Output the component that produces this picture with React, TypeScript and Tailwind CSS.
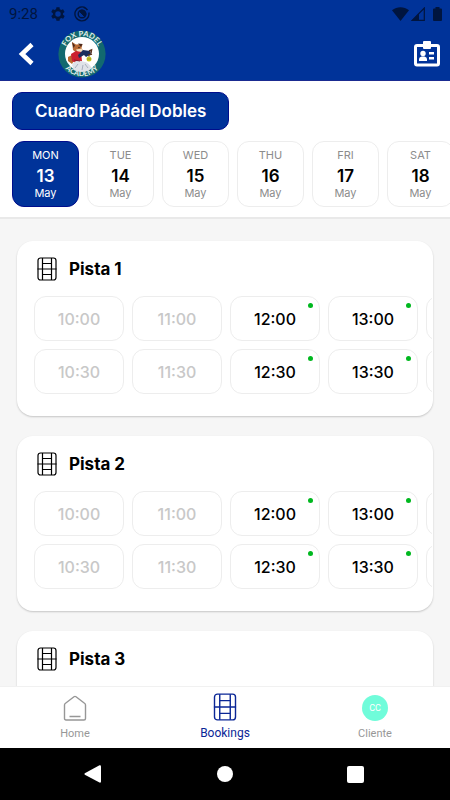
import React from "react";

const days = [
  { name: "MON", day: 13 },
  { name: "TUE", day: 14 },
  { name: "WED", day: 15 },
  { name: "THU", day: 16 },
  { name: "FRI", day: 17 },
  { name: "SAT", day: 18 },
];

const columns = [
  { times: ["10:00", "10:30"], free: false },
  { times: ["11:00", "11:30"], free: false },
  { times: ["12:00", "12:30"], free: true },
  { times: ["13:00", "13:30"], free: true },
  { times: ["14:00", "14:30"], free: true },
];

function CourtIcon({ className }: { className: string }) {
  return (
    <svg viewBox="0 0 20 24" className={className} fill="none" stroke="currentColor" aria-hidden="true">
      <rect x="1" y="1" width="18" height="22" rx="2.500" strokeWidth="1.200" />
      <path d="M5.500 1v22M14.500 1v22" strokeWidth="1.200" />
      <path d="M.5 12h19M5.500 6.500h9M5.500 17.500h9" strokeWidth="1.200" />
    </svg>
  );
}

function ClubLogo() {
  return (
    <svg viewBox="0 0 48 48" className="size-12" role="img" aria-label="Fox Padel Academy">
      <defs>
        <path id="arc-top" d="M6.200 24a17.800 17.800 0 0 1 35.600 0" />
        <path id="arc-bottom" d="M1.800 24a22.200 22.200 0 0 0 44.400 0" />
      </defs>
      <circle cx="24" cy="24" r="23.600" fill="#12696f" />
      <circle cx="24" cy="24" r="17" fill="#fff" />
      <g fill="#e3efec" fontFamily="Lato, sans-serif" fontWeight="700" fontSize="7.500">
        <text textAnchor="middle">
          <textPath href="#arc-top" startOffset="50%">FOX PADEL</textPath>
        </text>
        <text textAnchor="middle">
          <textPath href="#arc-bottom" startOffset="50%">ACADEMY</textPath>
        </text>
      </g>
      <path d="M14 12l4 2.500 6.500-.5-1 4 1.500 2.500-6 2.500-4-3z" fill="#b96b35" />
      <path d="M14 12l3 3.500-1.500 2.500zM20 13.500l4.500.5-1.500 3z" fill="#49291d" />
      <path d="M18 19.500l6-1 1 2.500-5 1.500z" fill="#f6dfbe" />
      <circle cx="21" cy="17.500" r=".7" fill="#211a1a" />
      <path d="M10 27l4-2 3 4-3 5-4-3z" fill="#b9692d" />
      <path d="M13 24l5-3 5 1 1 9-5 3-5-3z" fill="#cb1f2e" />
      <path d="M14 35c2-4 5-5 9-4l4 1c4 1 7 5 6 7-4 3-12 4-17 1z" fill="#dfe2e8" />
      <path d="M17 38l3-4M24 40l1-5M30 38l-3-4" stroke="#9ba2b1" strokeWidth=".8" />
      <path d="M20 25l5-5 7 1 1 3-5 3-2-2-5 3z" fill="#1b2e5d" />
      <path d="M31 21l2.500-1-.5 3M30 25l4-1" stroke="#57311f" strokeWidth="1.500" fill="none" />
      <path d="M31 25v3" stroke="#333" strokeWidth=".8" />
      <circle cx="31" cy="29" r="2.500" fill="#c9c927" />
      <path d="M29 29h4" stroke="#817c26" strokeWidth=".7" />
      <path d="M16 30l6 1" stroke="#861c2b" strokeWidth="1" />
    </svg>
  );
}

function StatusBar() {
  return (
    <div className="flex h-7 items-center pr-2 pl-[9px] font-['Roboto',sans-serif] text-[15px] text-[#00153f]">
      <span>9:28</span>
      <svg viewBox="4 3 18 18" className="ml-[13px] size-[14px]" fill="currentColor" aria-hidden="true">
        <path d="M19.400 13c.1-.6.1-1.400 0-2l2.100-1.600-2-3.500-2.500 1a8 8 0 0 0-1.700-1L15 3.200h-4l-.5 2.700a8 8 0 0 0-1.700 1l-2.500-1-2 3.500L6.500 11a7 7 0 0 0 0 2l-2.200 1.600 2 3.500 2.500-1a8 8 0 0 0 1.700 1l.5 2.700h4l.4-2.700a8 8 0 0 0 1.700-1l2.500 1 2-3.500zM13 15.500a3.500 3.500 0 1 1 0-7 3.500 3.500 0 0 1 0 7z" />
      </svg>
      <svg viewBox="0 0 16 16" className="ml-[9px] size-4" fill="none" stroke="currentColor" aria-hidden="true">
        <path d="M12 2.200A7 7 0 1 0 14.800 6.500M9.500 1.200A7 7 0 0 1 13.500 4" strokeWidth="1.400" />
        <circle cx="8" cy="8" r="3.800" strokeWidth="1.400" />
        <path d="M5.300 5.300l5.400 5.400A3.800 3.800 0 0 0 5.300 5.300z" fill="currentColor" strokeWidth="1" />
      </svg>
      <div className="ml-auto flex items-center gap-[2px]">
        <svg viewBox="0 0 17 14" className="h-[14px] w-[17px]" fill="currentColor" aria-hidden="true">
          <path d="M0 3.300C5-.8 12-.8 17 3.300L8.500 14z" />
        </svg>
        <svg viewBox="0 0 14 14" className="size-[14px]" aria-hidden="true">
          <path d="M13.300 1v12.300H1.200z" fill="none" stroke="currentColor" strokeWidth="1.200" />
          <path d="M8 6.500V14H.5z" fill="currentColor" />
        </svg>
        <svg viewBox="0 0 9 14" className="ml-[6px] h-[14px] w-[9px]" fill="currentColor" aria-hidden="true">
          <path d="M2.500 1.500V0h4v1.500H8q1 0 1 1V13q0 1-1 1H1q-1 0-1-1V2.500q0-1 1-1z" />
        </svg>
      </div>
    </div>
  );
}

function Header() {
  return (
    <header className="bg-[#003399]">
      <StatusBar />
      <div className="flex h-[53px] items-center border-b border-[#1a2b91] pr-[9px] pb-px pl-[18px]">
        <button type="button" aria-label="Back" className="flex h-8 w-4 items-center">
          <svg viewBox="0 0 16 24" className="h-6 w-4" fill="none" stroke="#fff" strokeWidth="4.500" aria-hidden="true">
            <path d="M14 2.500L4 12l10 9.500" />
          </svg>
        </button>
        <div className="ml-6">
          <ClubLogo />
        </div>
        <button type="button" aria-label="Membership card" className="ml-auto">
          <svg viewBox="0 0 28 26" className="h-[26px] w-7" aria-hidden="true">
            <rect x="2.500" y="4.500" width="23" height="19.500" rx="1.500" fill="none" stroke="#fff" strokeWidth="3" />
            <rect x="10" y="0" width="8" height="8" rx="1" fill="#fff" />
            <circle cx="10" cy="12.500" r="2.700" fill="#fff" />
            <path d="M6 20v-2q0-2 2.500-2.500h3q2.500.5 2.500 2.500v2zM16 11h5v2.500h-5zM16 16h5v2.500h-5z" fill="#fff" />
          </svg>
        </button>
      </div>
    </header>
  );
}

function DayButton({ name, day, selected }: { name: string; day: number; selected: boolean }) {
  const box = selected ? "border-[#000d8c] bg-[#003399] text-white" : "border-[#ededed] bg-white text-[#8c8c8c]";
  return (
    <button
      type="button"
      aria-pressed={selected}
      className={`flex h-[66px] w-[67px] shrink-0 flex-col items-center rounded-[12px] border pt-[5px] ${box}`}
    >
      <span className="text-[11px] leading-4">{name}</span>
      <span className={`text-[17px] leading-[26px] font-semibold ${selected ? "text-white" : "text-black"}`}>{day}</span>
      <span className="text-[11px] leading-2">May</span>
    </button>
  );
}

function Slot({ time, free }: { time: string; free: boolean }) {
  return (
    <button
      type="button"
      disabled={!free}
      className={`relative h-[45px] w-[90px] rounded-[12px] border border-[#ededed] text-base font-medium ${
        free ? "text-black" : "text-[#c8c8c8]"
      }`}
    >
      {time}
      {free && <span className="absolute top-[6px] right-[6px] size-[5px] rounded-full bg-[#00b81f]" />}
    </button>
  );
}

function Court({ name }: { name: string }) {
  return (
    <section className="rounded-2xl bg-white pt-4 pr-px pb-[22px] shadow-[0_1px_2px_rgba(0,0,0,0.2)]">
      <div className="flex h-6 items-center gap-3 pl-5">
        <CourtIcon className="h-6 w-5" />
        <h2 className="pt-px text-[17px] font-bold text-black">{name}</h2>
      </div>
      <div className="mt-[15px] flex gap-2 overflow-x-auto pl-[17px] [scrollbar-width:none]">
        {columns.map((column) => (
          <div key={column.times[0]} className="flex shrink-0 flex-col gap-2">
            {column.times.map((time) => (
              <Slot key={time} time={time} free={column.free} />
            ))}
          </div>
        ))}
      </div>
    </section>
  );
}

function TabBar() {
  return (
    <nav className="grid h-[62px] shrink-0 grid-cols-3 border-t border-[#f1f1f1] bg-white font-['Roboto',sans-serif] text-[11px] leading-4 text-[#979797]">
      <a href="#home" className="flex flex-col items-center pt-[7px]">
        <svg viewBox="0 0 24 28" className="h-7 w-6" fill="none" stroke="currentColor" strokeWidth="1.400" strokeLinejoin="round" aria-hidden="true">
          <path d="M3 26q-1.500 0-1.500-1.500V11q0-1 1-1.700L11 2.800q1-.8 2 0l8.500 6.500q1 .7 1 1.700v13.500Q22.500 26 21 26zM6.500 22.500h11" />
        </svg>
        <span className="mt-1">Home</span>
      </a>
      <a href="#bookings" aria-current="page" className="flex flex-col items-center pt-[6px] text-xs leading-4 text-[#0a2696]">
        <CourtIcon className="h-7 w-6" />
        <span className="mt-1">Bookings</span>
      </a>
      <a href="#cliente" className="flex flex-col items-center pt-2">
        <span className="flex size-[26px] items-center justify-center rounded-full bg-[#70fcda] text-[9px] text-white">CC</span>
        <span className="mt-[5px]">Cliente</span>
      </a>
    </nav>
  );
}

function SystemNav() {
  return (
    <div className="grid h-[52px] shrink-0 grid-cols-[1fr_80px_1fr] items-center bg-black text-white">
      <button type="button" aria-label="System back" className="justify-self-center">
        <svg viewBox="0 0 18 18" className="size-[18px]" fill="currentColor" aria-hidden="true">
          <path d="M.8 8.200L15.500.3Q17 0 17 1.500v15q0 1.500-1.500 1L.8 9.800Q0 9 .8 8.200z" />
        </svg>
      </button>
      <button type="button" aria-label="System home" className="size-4 justify-self-center rounded-full bg-white" />
      <button type="button" aria-label="Recent apps" className="mr-[5px] size-[17px] justify-self-center rounded-[2px] bg-white" />
    </div>
  );
}

export default function App() {
  return (
    <div className="flex h-dvh flex-col overflow-hidden bg-[#f6f6f6] font-['Inter',sans-serif]">
      <Header />
      <div className="border-b-2 border-[#e9e9e9] bg-white pt-[11px] pb-[10px] pl-3">
        <button type="button" className="h-[38px] rounded-[10px] border border-[#000d8c] bg-[#003399] px-[22px] pt-px text-[17px] font-semibold text-white">
          Cuadro Pádel Dobles
        </button>
        <div className="mt-[11px] flex gap-2 overflow-x-auto [scrollbar-width:none]">
          {days.map((d) => (
            <DayButton key={d.day} name={d.name} day={d.day} selected={d.day === 13} />
          ))}
        </div>
      </div>
      <main className="flex min-h-0 flex-1 flex-col gap-5 overflow-y-auto px-[17px] pt-[22px] pb-5 [scrollbar-width:none] [&>section]:shrink-0">
        <Court name="Pista 1" />
        <Court name="Pista 2" />
        <Court name="Pista 3" />
      </main>
      <TabBar />
      <SystemNav />
    </div>
  );
}
